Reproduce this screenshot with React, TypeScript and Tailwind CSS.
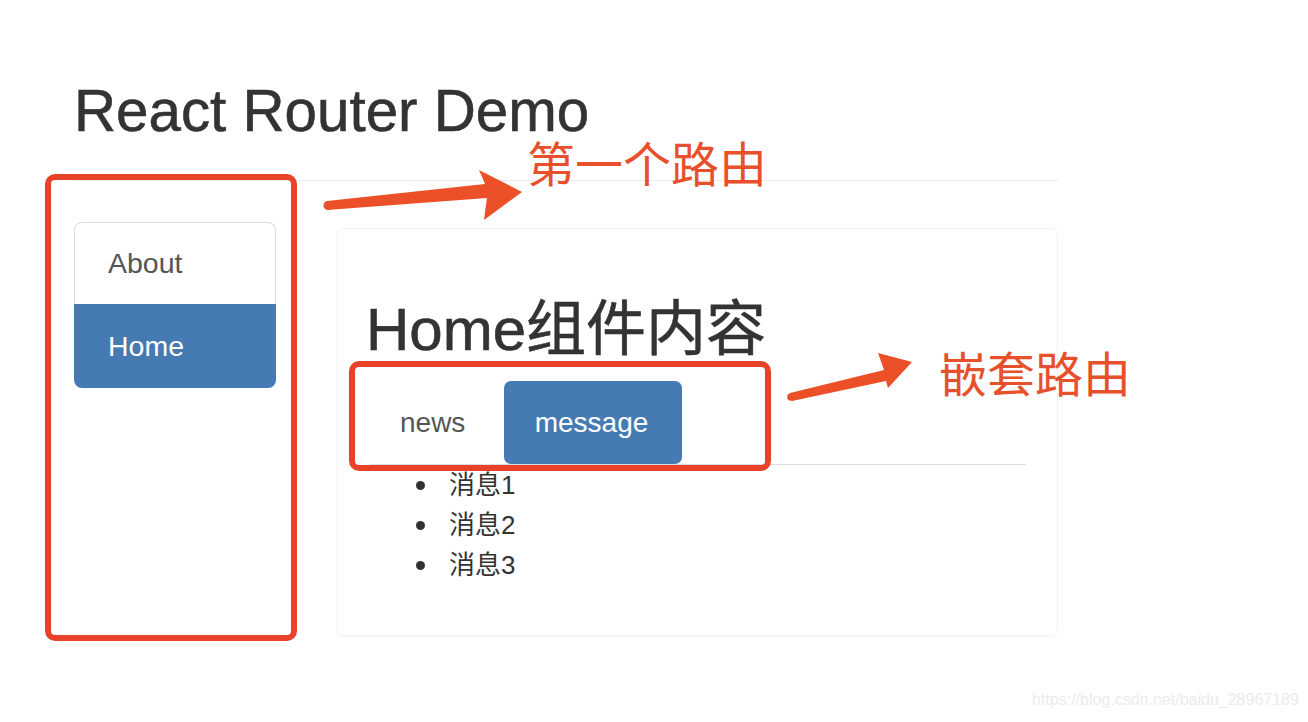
import React from "react";

export default function App() {
  return (
    <div className="relative w-[1308px] h-[722px] bg-white overflow-hidden font-['Liberation_Sans','Noto_Sans_CJK_SC',sans-serif]">
      <div className="pl-[73px] w-[1058px]">
        <div className="pt-[79px] pb-[37px] border-b border-[#ececec]">
          <h1 className="text-[58.3px] leading-[64px] text-[#333] ml-[1px] [-webkit-text-stroke:0.6px_#333]">React Router Demo</h1>
        </div>
        <div className="flex items-start mt-[41px]">
          <div className="ml-[1px] w-[202px] flex flex-col">
            <div className="h-[82px] flex items-center pl-[33px] border border-b-0 border-[#ddd] rounded-t-[8px] text-[28.5px] text-[#555]">
              About
            </div>
            <div className="h-[84px] flex items-center pl-[34px] bg-[#467ab3] rounded-b-[8px] text-[28.5px] text-white">
              Home
            </div>
          </div>
          <div className="ml-[61px] mt-[6px] w-[721px] h-[408px] border border-[#f3f3f3] rounded-[6px] shadow-[0_1px_2px_rgba(0,0,0,0.03)] px-[31px] pt-[68px]">
            <h2 className="-ml-[3px] text-[60px] leading-[65px] text-[#333] [-webkit-text-stroke:0.6px_#333]">Home组件内容</h2>
            <div className="mt-[19px] flex border-b border-[#ddd]">
              <div className="w-[135px] h-[83px] flex items-center pl-[31px] text-[28px] text-[#555]">news</div>
              <div className="w-[178px] h-[83px] flex items-center justify-center pr-[3px] bg-[#467ab3] rounded-[7px] text-[28px] text-white">
                message
              </div>
            </div>
            <ul className="pl-[47px] text-[26px] leading-[40px] text-[#333]">
              {["消息1", "消息2", "消息3"].map((t) => (
                <li key={t} className="flex items-center">
                  <span className="w-[9px] h-[9px] rounded-full bg-[#333] mr-[24px]" />
                  <span>{t}</span>
                </li>
              ))}
            </ul>
          </div>
        </div>
      </div>

      {/* annotations */}
      <div className="absolute left-[45px] top-[174px] w-[252px] h-[467px] border-[6px] border-[#e8432a] rounded-[10px]" />
      <div className="absolute left-[349px] top-[361px] w-[422px] h-[110px] border-[6px] border-[#e8432a] rounded-[10px]" />
      <svg className="absolute left-0 top-0" width="1308" height="722" viewBox="0 0 1308 722">
        <polygon points="327,201 485,184 479,170 522,192 484,220 487,198 327,210" fill="#eb5028" />
        <circle cx="328" cy="205.5" r="4.5" fill="#eb5028" />
        <polygon points="790,393 884,370 878,353 912,362 888,388 886,381 792,401" fill="#eb5028" />
        <circle cx="791" cy="397" r="3.8" fill="#eb5028" />
      </svg>
      <div className="absolute left-[527px] top-[137px] text-[48px] leading-[48px] text-[#e8502b] font-['Noto_Sans_CJK_SC',sans-serif]">
        第一个路由
      </div>
      <div className="absolute left-[939px] top-[347px] text-[48px] leading-[48px] text-[#e8502b] font-['Noto_Sans_CJK_SC',sans-serif]">
        嵌套路由
      </div>
      <div className="absolute left-[1032px] top-[690px] text-[16px] leading-[20px] text-[#ebebeb] whitespace-nowrap">
        https://blog.csdn.net/baidu_28967189
      </div>
    </div>
  );
}
